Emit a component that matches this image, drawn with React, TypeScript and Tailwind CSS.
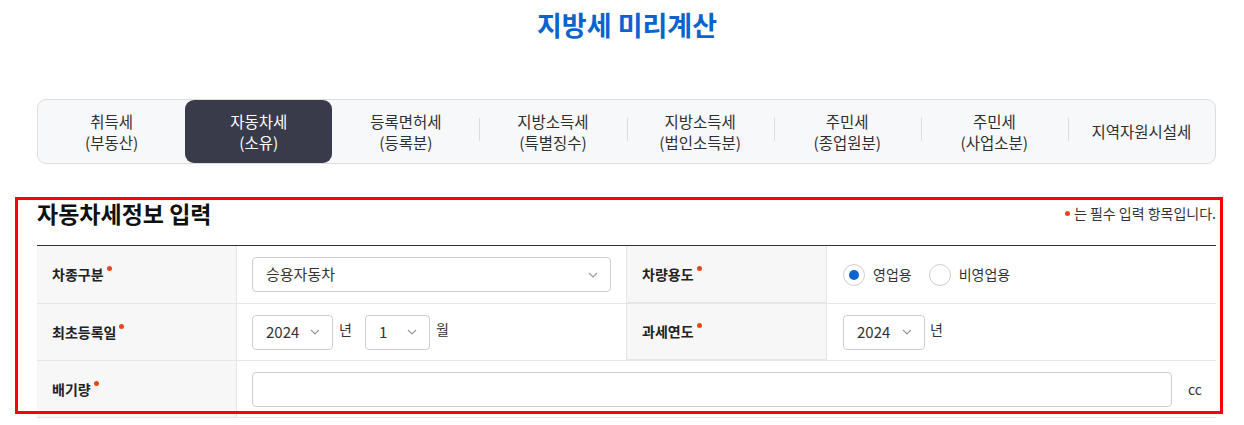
import React from "react";

const font = { fontFamily: '"Noto Sans CJK KR", "Noto Sans", sans-serif' };

function Chevron() {
  return (
    <svg width="10" height="6" viewBox="0 0 10 6" className="shrink-0">
      <path d="M1 1l4 4 4-4" fill="none" stroke="#9a9a9a" strokeWidth="1.2" />
    </svg>
  );
}

function Req() {
  return <span className="ml-[3px] inline-block h-[5px] w-[5px] -translate-y-[6px] rounded-full bg-[#e9471b]" />;
}

function Label({ children }: { children: React.ReactNode }) {
  return (
    <div className="flex items-center bg-[#f7f7f7] pl-[15px] text-[14px] font-bold text-[#222] border-b border-[#e6e6e6]">
      {children}
      <Req />
    </div>
  );
}

function Select({ value, w }: { value: string; w: string }) {
  return (
    <div className={`flex h-[35px] items-center justify-between rounded-[4px] border border-[#cfcfcf] bg-white pl-[13px] pr-[12px] text-[15px] text-[#333] ${w}`}>
      <span>{value}</span>
      <Chevron />
    </div>
  );
}

const tabs: [string, string?][] = [
  ["취득세", "(부동산)"],
  ["자동차세", "(소유)"],
  ["등록면허세", "(등록분)"],
  ["지방소득세", "(특별징수)"],
  ["지방소득세", "(법인소득분)"],
  ["주민세", "(종업원분)"],
  ["주민세", "(사업소분)"],
  ["지역자원시설세"],
];

export default function App() {
  return (
    <div className="relative w-[1244px] h-[425px] overflow-hidden bg-white" style={font}>
      <h1 className="pl-[10px] pt-[6px] text-center text-[27px] font-bold leading-[38px] text-[#0b63ce]">지방세 미리계산</h1>

      <div className="ml-[37px] mt-[55px] grid h-[65px] w-[1179px] grid-cols-8 rounded-[9px] border border-[#dedede] bg-[#f7f8fa]">
        {tabs.map(([a, b], i) => {
          const active = i === 1;
          const sep = i > 2;
          return (
            <div key={i} className="relative flex">
              {sep && <span className="absolute left-0 top-[18px] h-[23px] w-px bg-[#dcdcdc]" />}
              <div
                className={`flex flex-1 flex-col items-center justify-center text-[15.5px] leading-[21px] ${
                  active ? "rounded-[9px] bg-[#393a4a] text-white" : "text-[#2f2f2f]"
                }`}
              >
                <span>{a}</span>
                {b && <span>{b}</span>}
              </div>
            </div>
          );
        })}
      </div>

      <div className="ml-[37px] mt-[34px] w-[1179px]">
        <div className="mb-[17px] flex h-[30px] items-center justify-between">
          <h2 className="text-[23px] font-bold leading-[30px] text-[#111]">자동차세정보 입력</h2>
          <div className="flex items-center text-[14px] text-[#333]">
            <span className="mr-[4px] inline-block h-[5px] w-[5px] rounded-full bg-[#e9471b]" />
            는 필수 입력 항목입니다.
          </div>
        </div>
        <div className="grid grid-cols-[199px_390px_200px_390px] grid-rows-[58px_57px_57px] border-t border-[#333]">
          <Label>차종구분</Label>
          <div className="flex items-center border-b border-l border-[#e6e6e6] pl-[15px]">
            <Select value="승용자동차" w="w-[359px]" />
          </div>
          <div className="border-b border-l border-[#e6e6e6] grid">
            <Label>차량용도</Label>
          </div>
          <div className="flex items-center gap-[8px] border-b border-l border-[#e6e6e6] pl-[16px] text-[14px] text-[#333]">
            <span className="flex h-[22px] w-[22px] items-center justify-center rounded-full border border-[#cfcfcf] bg-white">
              <span className="h-[10px] w-[10px] rounded-full bg-[#0b63ce]" />
            </span>
            <span className="mr-[9px]">영업용</span>
            <span className="h-[22px] w-[22px] rounded-full border border-[#cfcfcf] bg-white" />
            <span>비영업용</span>
          </div>

          <Label>최초등록일</Label>
          <div className="flex items-center border-b border-l border-[#e6e6e6] pl-[15px] text-[14px] text-[#333]">
            <Select value="2024" w="w-[81px]" />
            <span className="ml-[6px] mr-[13px] -translate-y-[3px]">년</span>
            <Select value="1" w="w-[65px]" />
            <span className="ml-[6px] -translate-y-[3px]">월</span>
          </div>
          <div className="border-b border-l border-[#e6e6e6] grid">
            <Label>과세연도</Label>
          </div>
          <div className="flex items-center border-b border-l border-[#e6e6e6] pl-[16px] text-[14px] text-[#333]">
            <Select value="2024" w="w-[82px]" />
            <span className="ml-[5px] -translate-y-[3px]">년</span>
          </div>

          <Label>배기량</Label>
          <div className="col-span-3 flex items-center border-b border-l border-[#e6e6e6] pl-[15px] text-[14px] text-[#333]">
            <div className="h-[35px] w-[920px] rounded-[4px] border border-[#cfcfcf] bg-white" />
            <span className="ml-[16px]">cc</span>
          </div>
        </div>
      </div>

      <div className="pointer-events-none absolute left-[15px] top-[197px] h-[217px] w-[1208px] border-[3px] border-[#ff0000]" />
    </div>
  );
}
